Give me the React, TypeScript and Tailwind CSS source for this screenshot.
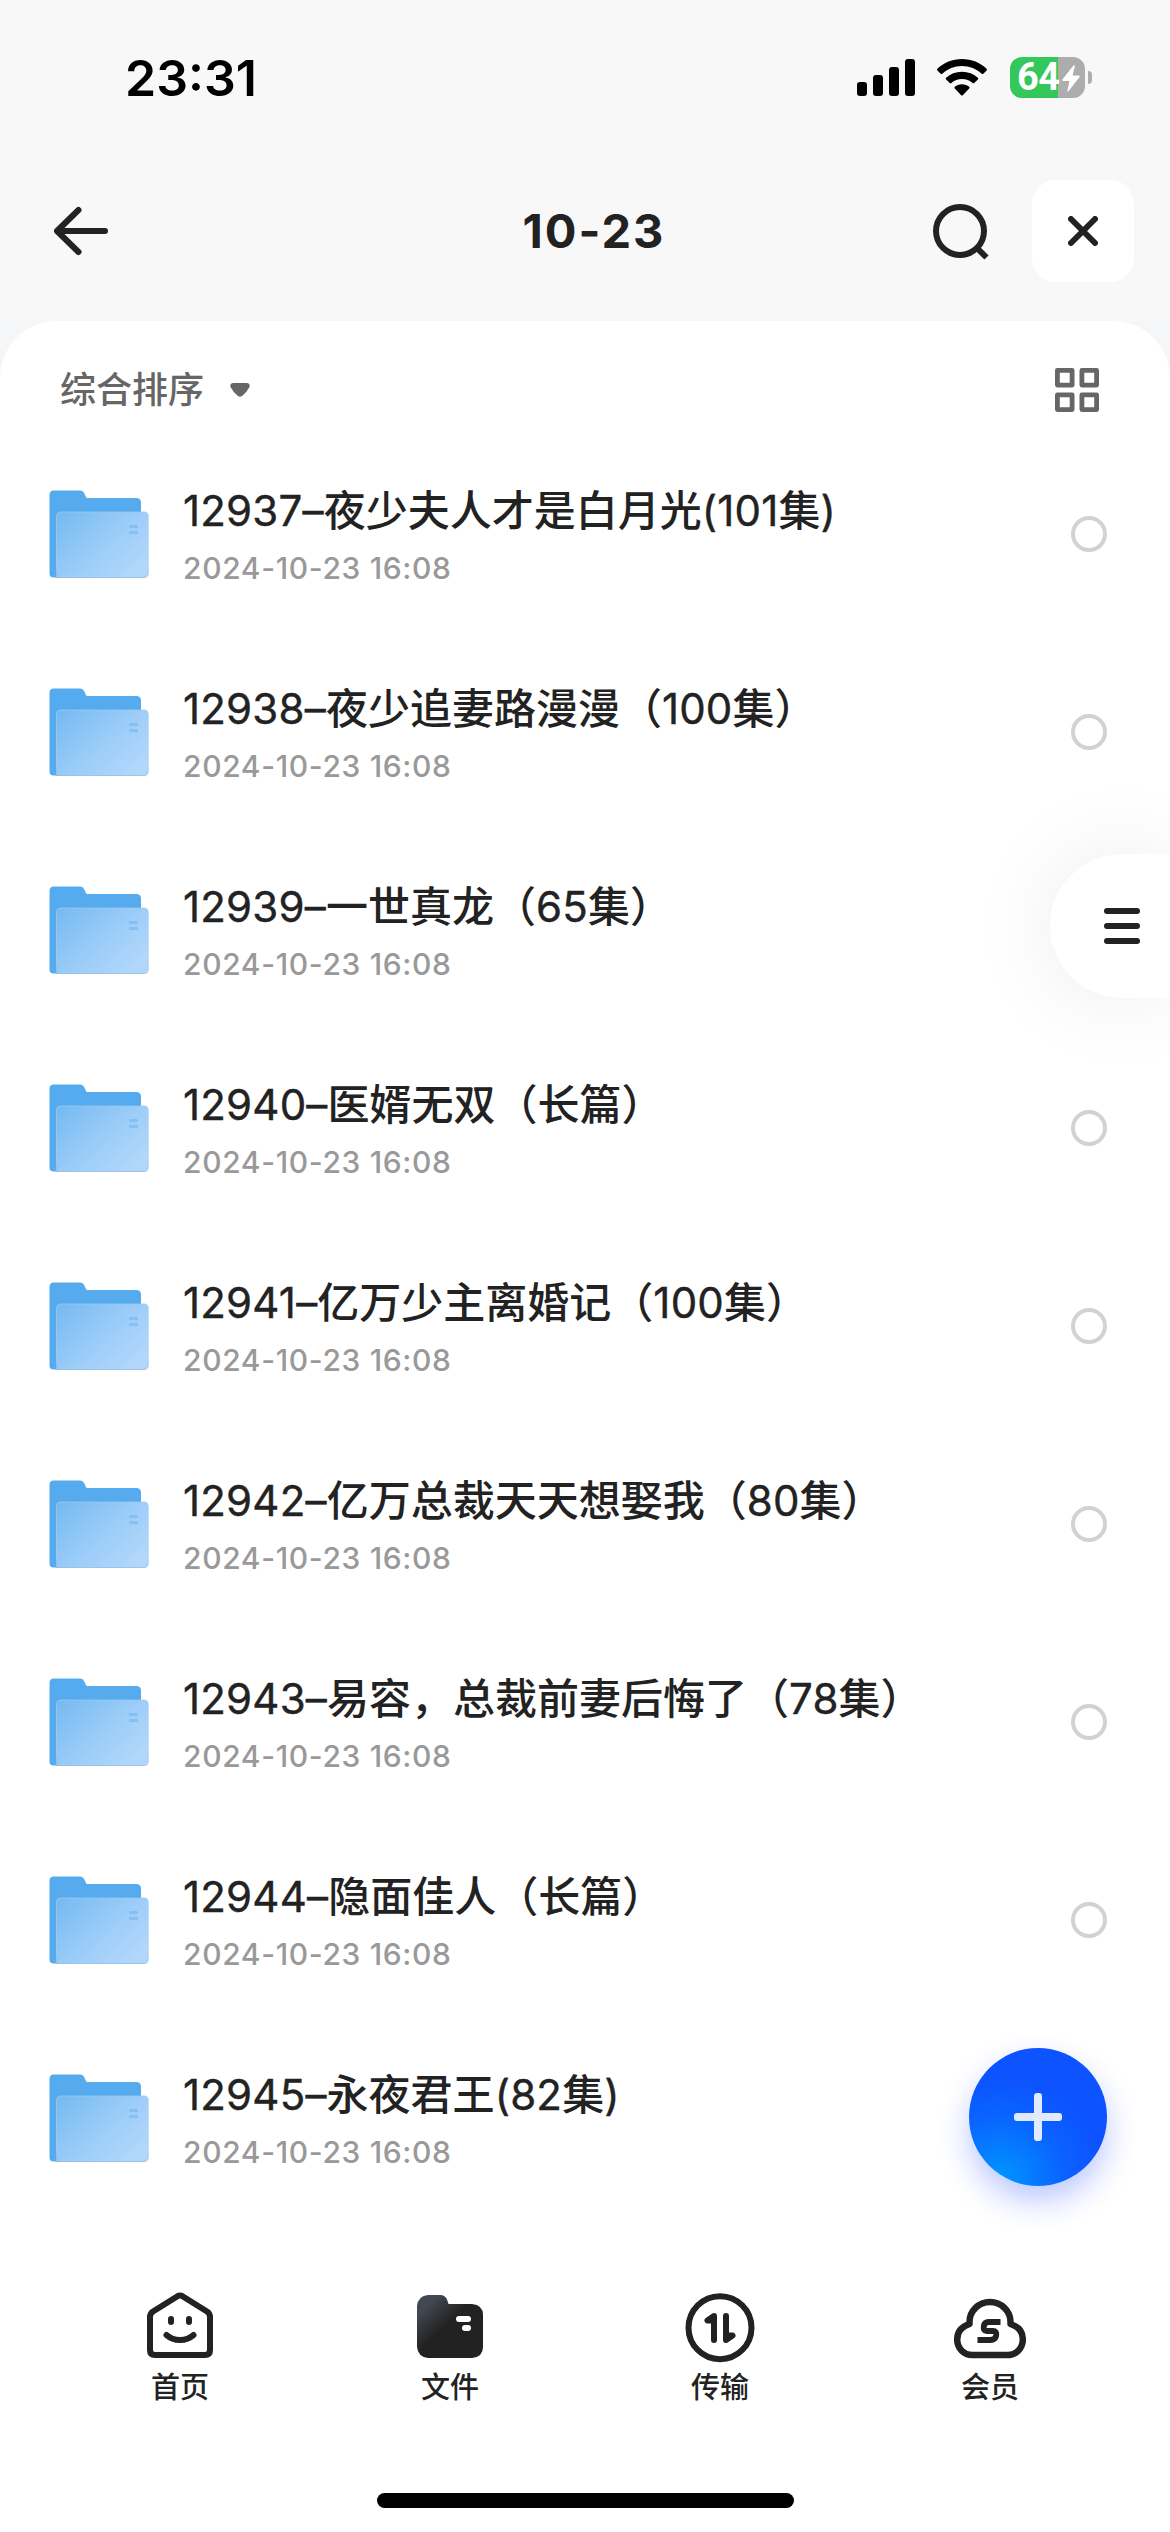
import React, { useState } from 'react';

interface Folder {
  id: number;
  name: string;
  date: string;
}

const folders: Folder[] = [
  { id: 12937, name: '12937–夜少夫人才是白月光(101集)', date: '2024-10-23 16:08' },
  { id: 12938, name: '12938–夜少追妻路漫漫（100集）', date: '2024-10-23 16:08' },
  { id: 12939, name: '12939–一世真龙（65集）', date: '2024-10-23 16:08' },
  { id: 12940, name: '12940–医婿无双（长篇）', date: '2024-10-23 16:08' },
  { id: 12941, name: '12941–亿万少主离婚记（100集）', date: '2024-10-23 16:08' },
  { id: 12942, name: '12942–亿万总裁天天想娶我（80集）', date: '2024-10-23 16:08' },
  { id: 12943, name: '12943–易容，总裁前妻后悔了（78集）', date: '2024-10-23 16:08' },
  { id: 12944, name: '12944–隐面佳人（长篇）', date: '2024-10-23 16:08' },
  { id: 12945, name: '12945–永夜君王(82集)', date: '2024-10-23 16:08' },
];

const StatusBar: React.FC = () => (
  <div className="flex h-[155px] items-center justify-between pr-[78px] pl-[125px]">
    <span className="text-[50px] leading-none font-semibold text-black">23:31</span>
    <div className="flex items-center">
      <svg className="h-[38px] w-[58px]" viewBox="0 0 58 38">
        <rect x="0" y="23" width="10" height="14" rx="3" />
        <rect x="16" y="16" width="10" height="21" rx="3" />
        <rect x="32" y="8" width="10" height="29" rx="3" />
        <rect x="48" y="0" width="10" height="37" rx="3" />
      </svg>
      <svg className="ml-[22px] h-[38px] w-[50px]" viewBox="0 0 50 38">
        <path d="M25 0C34.500 0 43.300 3.600 49.600 9.800Q50.300 10.600 49.600 11.400L46.300 14.700Q45.500 15.400 44.700 14.700C39.500 9.700 32.600 6.900 25 6.900S10.500 9.700 5.300 14.700Q4.500 15.400 3.700 14.700L.4 11.400Q-.3 10.600 .4 9.800C6.700 3.600 15.500 0 25 0Z" />
        <path d="M25 12.700C31.200 12.700 36.700 14.900 40.900 18.800Q41.700 19.600 40.900 20.400L37.200 24.100Q36.400 24.800 35.600 24.100C32.800 21.500 29.100 20 25 20S17.200 21.500 14.400 24.100Q13.600 24.800 12.800 24.100L9.100 20.400Q8.300 19.600 9.100 18.800C13.300 14.900 18.800 12.700 25 12.700Z" />
        <path d="M25 25.300C28 25.300 30.300 26.200 32.200 27.800Q33 28.600 32.200 29.400L25.800 36.200Q25 37 24.200 36.200L17.800 29.400Q17 28.600 17.800 27.800C19.700 26.200 22 25.300 25 25.300Z" />
      </svg>
      <div className="relative ml-[23px] h-[41px] w-[75px]">
        <div className="h-full w-full rounded-[12px] bg-[linear-gradient(to_right,#34c759_48px,#adadad_48px)]" />
        <span className="absolute top-0 left-[7px] font-['Roboto'] text-[38px] leading-[41px] font-bold tracking-[-0.5px] text-white">
          64
        </span>
        <svg className="absolute top-[8px] left-[52px] h-[27px] w-[18px]" viewBox="0 0 18 27" fill="#fff">
          <path d="M11.500 .6Q13.200-.6 12.800 1.300L10.600 10.500H16.800Q18.300 10.800 17.400 12.200L6.600 26Q5 27.300 5.400 25.400L7.500 16H1.200Q-.3 15.600 .6 14.200Z" />
        </svg>
      </div>
      <div className="ml-[3px] h-[13px] w-[4px] rounded-r-full bg-[#adadad]" />
    </div>
  </div>
);

const Header: React.FC = () => (
  <div className="flex h-[166px] items-start pt-[25px] pr-[36px] pl-[32px]">
    <div className="flex h-[102px] flex-1 items-center pl-[22px]">
      <svg className="h-[54px] w-[54px]" viewBox="0 0 54 54" fill="none" stroke="#222" strokeWidth="6" strokeLinecap="round" strokeLinejoin="round">
        <path d="M51 27H3M24.500 6L3 27L24.500 48" />
      </svg>
    </div>
    <h1 className="flex h-[102px] items-center text-[47px] font-bold tracking-[2px] text-[#222]">10-23</h1>
    <div className="flex h-[102px] flex-1 items-center justify-end gap-[42px]">
      <svg className="h-[60px] w-[60px]" viewBox="0 0 60 60" fill="none" stroke="#222" strokeWidth="6">
        <circle cx="30" cy="30" r="24" />
        <path d="M47 47L56.500 56.500" />
      </svg>
      <button className="flex h-[102px] w-[102px] items-center justify-center rounded-[24px] bg-white">
        <svg className="h-[30px] w-[30px]" viewBox="0 0 30 30" stroke="#222" strokeWidth="6" strokeLinecap="round">
          <path d="M3 3L27 27M27 3L3 27" />
        </svg>
      </button>
    </div>
  </div>
);

const FolderIcon: React.FC = () => (
  <svg className="h-[88px] w-[100px] shrink-0" viewBox="0 0 100 88">
    <defs>
      <linearGradient id="front" x1="0" y1="0" x2="1" y2="0.75">
        <stop offset="0" stopColor="#74b9f1" />
        <stop offset="0.550" stopColor="#9accf8" />
        <stop offset="1" stopColor="#b2d7fb" />
      </linearGradient>
      <linearGradient id="rim" x1="0" y1="0" x2="0" y2="1">
        <stop offset="0" stopColor="#9cc9ee" />
        <stop offset="0.800" stopColor="#a9cfee" />
        <stop offset="1" stopColor="#8fb9e0" />
      </linearGradient>
    </defs>
    <path d="M4.500 0.500H31Q34 0.500 35.300 3.500L37.500 8H88Q92 8.500 92 12.500V60L10 87.500H4.500Q0.500 87.500 0.500 83V5Q0.500 0.500 4.500 0.500Z" fill="#55abee" />
    <path d="M11.500 22H95Q99.200 22 99.200 26.500V83Q99.200 87.500 95 87.500H7Q7.500 86 7.500 83V26Q7.500 22 11.500 22Z" fill="url(#front)" stroke="url(#rim)" strokeWidth="0.8" />
    <rect x="80" y="35" width="9" height="3" rx="1" fill="#86bff3" />
    <rect x="80" y="41" width="9" height="3" rx="1" fill="#86bff3" />
  </svg>
);

// Digits are set a little lighter than the Chinese characters around them
const FolderName: React.FC<{ name: string }> = ({ name }) => (
  <p className="text-[42px] leading-[56px] font-medium whitespace-nowrap text-[#222]">
    {name.split(/([\d–()]+)/).map((part, index) =>
      index % 2 === 1 ? (
        <span key={index} className="font-normal tracking-[0.2px] [-webkit-text-stroke:0.4px_#222]">
          {part}
        </span>
      ) : (
        part
      )
    )}
  </p>
);

interface FolderRowProps {
  folder: Folder;
  selected: boolean;
  onToggle: (id: number) => void;
}

const FolderRow: React.FC<FolderRowProps> = ({ folder, selected, onToggle }) => (
  <li className="flex h-[198px] items-center pr-[63px] pl-[49px]">
    <FolderIcon />
    <div className="ml-[34px] flex-1 pt-[11px]">
      <FolderName name={folder.name} />
      <p className="text-[30px] leading-[58px] font-medium tracking-[0.65px] text-[#999]">{folder.date}</p>
    </div>
    <button
      onClick={() => onToggle(folder.id)}
      className={
        selected
          ? 'h-[36px] w-[36px] rounded-full border-4 border-[#0d53ff] bg-[#0d53ff]'
          : 'h-[36px] w-[36px] rounded-full border-4 border-[#d1d1d6]'
      }
    />
  </li>
);

const HomeIcon: React.FC = () => (
  <svg className="h-[74px] w-[72px]" viewBox="0 0 72 74" fill="none" stroke="#222" strokeWidth="6" strokeLinecap="round" strokeLinejoin="round">
    <path d="M33.500 6.200Q36 4.800 38.500 6.200L63 21.500Q66 23.500 66 27V60Q66 65 61 65H11Q6 65 6 60V27Q6 23.500 9 21.500Z" />
    <path d="M27 29V32M45 29V32M22.500 45Q28 50 36 50T49.500 45" />
  </svg>
);

const FilesIcon: React.FC = () => (
  <svg className="h-[74px] w-[72px]" viewBox="0 0 72 74">
    <defs>
      <linearGradient id="files" x1="0.050" y1="0.100" x2="0.500" y2="0.550">
        <stop offset="0.200" stopColor="#414851" />
        <stop offset="0.850" stopColor="#222" />
      </linearGradient>
    </defs>
    <path d="M14 5H26.500Q31 5 33 9.500L34.500 14H58Q69 15 69 25V57Q69 67 58 68H14Q4 67 3 57V16Q4 6 14 5Z" fill="url(#files)" />
    <rect x="42" y="26" width="15" height="6" rx="3" fill="#fff" />
    <rect x="48" y="35" width="9" height="6" rx="3" fill="#fff" />
  </svg>
);

const TransferIcon: React.FC = () => (
  <svg className="h-[74px] w-[72px]" viewBox="0 0 72 74" fill="none" stroke="#222" strokeWidth="6" strokeLinecap="round" strokeLinejoin="round">
    <circle cx="36" cy="37.700" r="31.500" />
    <path d="M30 50V26L23.500 30.500H30" />
    <path d="M42 26V50L48.500 45.500H42" />
  </svg>
);

const MemberIcon: React.FC = () => (
  <svg className="h-[74px] w-[72px]" viewBox="0 0 72 74" fill="none" stroke="#222" strokeWidth="6.500" strokeLinejoin="round">
    <path d="M18.500 65H53.500C62.500 65 68.800 58 68.800 49.500C68.800 42 64 36.500 56.500 34V32A20.500 20 0 0 0 15.500 32V34C8 36.500 3.200 42 3.200 49.500C3.200 58 9.500 65 18.500 65Z" />
    <path d="M46.500 32H34.500Q30.500 32 29.800 36.200T32.500 41H39Q43 41 42.200 45.500T36.500 50H23.500" strokeWidth="5.800" strokeLinejoin="miter" />
  </svg>
);

const tabs = [
  { label: '首页', icon: <HomeIcon /> },
  { label: '文件', icon: <FilesIcon /> },
  { label: '传输', icon: <TransferIcon /> },
  { label: '会员', icon: <MemberIcon /> },
];

const App: React.FC = () => {
  const [selected, setSelected] = useState<number[]>([]);

  const handleToggle = (id: number) => {
    setSelected((prev) => (prev.includes(id) ? prev.filter((item) => item !== id) : [...prev, id]));
  };

  return (
    <div className="relative flex h-[2532px] w-[1170px] flex-col overflow-hidden bg-[#f5f6f8] font-['Inter','Noto_Sans_CJK_SC',sans-serif]">
      <div className="bg-[#f8f8f8]">
        <StatusBar />
        <Header />
      </div>

      <main className="flex flex-1 flex-col rounded-t-[57px] bg-white">
        {/* Sort bar */}
        <div className="flex h-[114px] items-center justify-between pt-[24px] pr-[71px] pl-[60px]">
          <div className="flex items-center gap-[26px]">
            <span className="text-[36px] leading-none font-medium text-[#666]">综合排序</span>
            <svg className="h-[14px] w-[20px]" viewBox="0 0 20 14" fill="#666">
              <path d="M3 0H17Q20.500 .5 19.500 4Q17 9 12 13Q10 14.500 8 13Q3 9 .5 4Q-.5 .5 3 0Z" />
            </svg>
          </div>
          <svg className="h-[44px] w-[44px]" viewBox="0 0 44 44" fill="none" stroke="#666" strokeWidth="4.800" strokeLinejoin="round">
            <rect x="2.400" y="2.400" width="14.700" height="14.700" />
            <rect x="26.900" y="2.400" width="14.700" height="14.700" />
            <rect x="2.400" y="26.900" width="14.700" height="14.700" />
            <rect x="26.900" y="26.900" width="14.700" height="14.700" />
          </svg>
        </div>

        {/* Folder list */}
        <ul className="flex flex-col">
          {folders.map((folder) => (
            <FolderRow
              key={folder.id}
              folder={folder}
              selected={selected.includes(folder.id)}
              onToggle={handleToggle}
            />
          ))}
        </ul>

        {/* Tab bar */}
        <nav className="mt-[73px] flex px-[45px]">
          {tabs.map((tab) => (
            <button key={tab.label} className="flex flex-1 flex-col items-center">
              {tab.icon}
              <span className="mt-[8px] text-[29px] leading-[32px] font-medium text-[#222]">{tab.label}</span>
            </button>
          ))}
        </nav>

        <div className="mt-auto mb-[24px] h-[15px] w-[417px] self-center rounded-full bg-black" />
      </main>

      {/* Side menu handle */}
      <button className="absolute top-[854px] right-0 flex h-[144px] w-[120px] flex-col justify-center gap-[9px] rounded-l-full bg-white pl-[54px] shadow-[0_0_90px_rgba(0,0,0,0.08)]">
        <span className="h-[6px] w-[36px] rounded-full bg-[#222]" />
        <span className="h-[6px] w-[36px] rounded-full bg-[#222]" />
        <span className="h-[6px] w-[36px] rounded-full bg-[#222]" />
      </button>

      {/* Add button */}
      <button className="absolute top-[2048px] left-[969px] flex h-[138px] w-[138px] items-center justify-center rounded-full bg-[radial-gradient(circle_at_22%_95%,#0096ff_0%,#0a63ff_38%,#0d53ff_60%)] shadow-[0_15px_30px_rgba(13,60,255,0.28)]">
        <svg className="h-[48px] w-[48px]" viewBox="0 0 48 48" fill="#e2eaff">
          <path d="M23 0H25Q28 0 28 3V20H45Q48 20 48 23V25Q48 28 45 28H28V45Q28 48 25 48H23Q20 48 20 45V28H3Q0 28 0 25V23Q0 20 3 20H20V3Q20 0 23 0Z" />
        </svg>
      </button>
    </div>
  );
};

export default App;
